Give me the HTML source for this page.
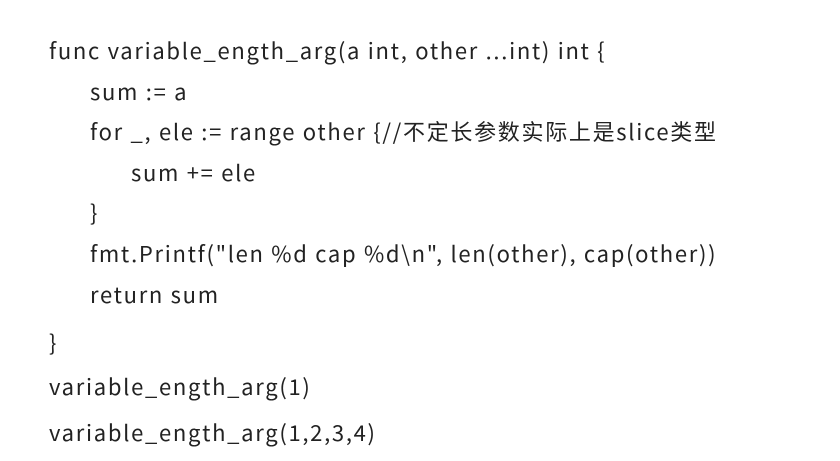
<!DOCTYPE html>
<html><head><meta charset="utf-8"><style>
body{margin:0;width:840px;height:461px;background:#fff;overflow:hidden;position:relative}
div{position:absolute;font-family:"Noto Sans CJK SC",sans-serif;font-size:22px;line-height:40px;color:#222;white-space:pre;letter-spacing:1.7px}
</style></head><body>
<div style="left:49px;top:30px">func variable_ength_arg(a int, other ...int) int {</div>
<div style="left:90px;top:71px">sum := a</div>
<div style="left:90px;top:111px">for _, ele := range other {//不定长参数实际上是slice类型</div>
<div style="left:131px;top:152px">sum += ele</div>
<div style="left:90px;top:192px">}</div>
<div style="left:90px;top:233px">fmt.Printf("len %d cap %d\n", len(other), cap(other))</div>
<div style="left:90px;top:274px">return sum</div>
<div style="left:49px;top:322px">}</div>
<div style="left:49px;top:366px">variable_ength_arg(1)</div>
<div style="left:49px;top:412px">variable_ength_arg(1,2,3,4)</div>
</body></html>
